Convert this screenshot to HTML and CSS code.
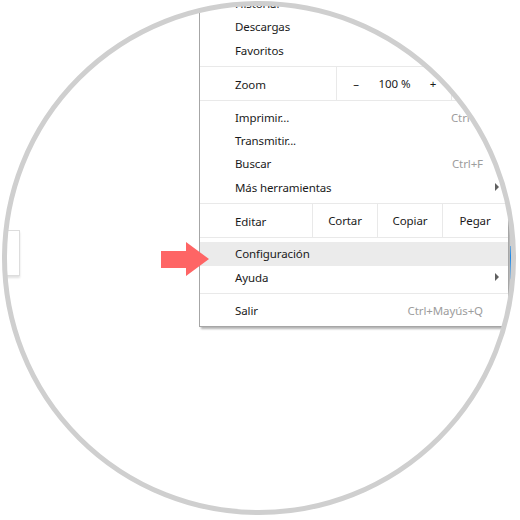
FILE: index.html
```html
<!DOCTYPE html>
<html lang="es">

<head>
    <meta charset="UTF-8">
    <meta name="viewport" content="width=device-width, initial-scale=1.0">
    <title>Menú de Chrome</title>
    <link rel="stylesheet" href="styles.css">
</head>

<body>
    <div class="lens">
        <div class="page">
            <div class="tab"></div>

            <div class="menu">
                <div class="group">
                    <div class="item">Historial</div>
                    <div class="item">Descargas</div>
                    <div class="item">Favoritos</div>
                </div>

                <div class="split">
                    <span class="split-label">Zoom</span>
                    <div class="zoom">
                        <span>&ndash;</span>
                        <span>100 %</span>
                        <span>+</span>
                    </div>
                    <span class="split-cell fullscreen"></span>
                </div>

                <div class="group">
                    <div class="item">Imprimir... <span class="key">Ctrl+P</span></div>
                    <div class="item">Transmitir...</div>
                    <div class="item">Buscar <span class="key">Ctrl+F</span></div>
                    <div class="item">Más herramientas <span class="sub"></span></div>
                </div>

                <div class="split">
                    <span class="split-label edit">Editar</span>
                    <span class="split-cell">Cortar</span>
                    <span class="split-cell">Copiar</span>
                    <span class="split-cell">Pegar</span>
                </div>

                <div class="group">
                    <div class="item active">Configuración</div>
                    <div class="item">Ayuda <span class="sub"></span></div>
                </div>

                <div class="group">
                    <div class="item">Salir <span class="key">Ctrl+Mayús+Q</span></div>
                </div>
            </div>

            <div class="edge"></div>
        </div>

        <!-- pointer towards "Configuración" -->
        <svg class="arrow" width="50" height="36" viewBox="0 0 50 36">
            <polygon points="1,10 26,10 26,1 49,18 26,35 26,27 1,27" fill="#fe6565" />
        </svg>

        <div class="ring"></div>
    </div>
</body>

</html>
```

FILE: styles.css
```css
body {
    margin: 0;
    background: #ffffff;
    font-family: "Noto Sans", "Open Sans", sans-serif;
    font-size: 11.5px;
    letter-spacing: -0.1px;
    color: #1a1a1a;
}

.lens {
    position: relative;
    width: 520px;
    height: 520px;
    overflow: hidden;
}

.page {
    display: flex;
    align-items: flex-start;
    width: 520px;
    height: 520px;
    padding-left: 6px;
    box-sizing: border-box;
    background: #ffffff;
    clip-path: circle(253px at 259px 258px);
}

.tab {
    width: 12px;
    height: 44px;
    margin-top: 230px;
    border: 1px solid #dddddd;
    background: #ffffff;
    box-shadow: 0 2px 2px rgba(0, 0, 0, 0.12);
}

/* Menu */
.menu {
    width: 310px;
    margin-top: -13px;
    margin-left: 179px;
    flex-shrink: 0;
    box-sizing: border-box;
    border: 1px solid #a6a6a6;
    background: #ffffff;
    box-shadow: 2px 2px 2px rgba(0, 0, 0, 0.3);
}

.menu > div + div {
    border-top: 1px solid #e9e9e9;
}

.group {
    padding: 4px 0 4.5px;
}

.item {
    display: flex;
    align-items: center;
    height: 23.33px;
    padding: 0 25px 0 35px;
}

.item.active {
    background: #ebebeb;
}

.key {
    margin-left: auto;
    color: #9d9d9d;
}

.sub {
    margin-left: auto;
    margin-right: -16px;
    width: 0;
    height: 0;
    border-top: 4px solid transparent;
    border-bottom: 4px solid transparent;
    border-left: 4px solid #606060;
}

.split {
    display: flex;
    height: 33px;
}

.split-label {
    display: flex;
    align-items: center;
    width: 136px;
    padding: 2px 0 0 35px;
    box-sizing: border-box;
}

.split-label.edit {
    width: 112px;
}

.split-cell {
    display: flex;
    align-items: center;
    justify-content: center;
    width: 65px;
    border-left: 1px solid #e9e9e9;
    box-sizing: border-box;
}

.zoom {
    display: grid;
    grid-template-columns: 38px 39px 38px;
    align-items: center;
    justify-items: center;
    width: 115px;
    border-left: 1px solid #e9e9e9;
    box-sizing: border-box;
}

.fullscreen {
    width: 56px;
}

.edge {
    width: 3px;
    height: 60px;
    margin-top: 246px;
    margin-left: 1px;
    background: #1e88e5;
}

/* Overlays */
.arrow {
    position: absolute;
    left: 160px;
    top: 241px;
}

.ring {
    position: absolute;
    left: 2px;
    top: 1px;
    width: 514px;
    height: 514px;
    box-sizing: border-box;
    border: 5px solid #cfcfcf;
    border-radius: 50%;
}
```
